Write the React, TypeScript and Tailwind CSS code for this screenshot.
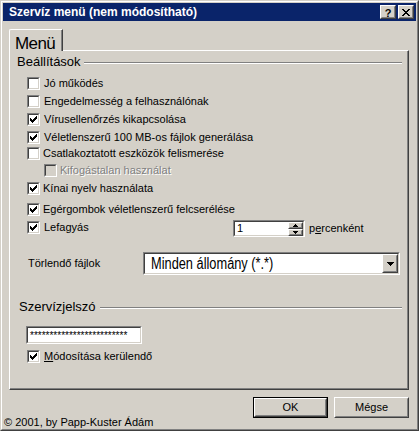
import React from "react";

const checkPath =
  "M6 0h1v1h-1z M5 1h2v1h-2z M0 2h1v1h-1z M4 2h3v1h-3z M0 3h2v1h-2z M3 3h3v1h-3z M0 4h5v1h-5z M1 5h3v1h-3z M2 6h1v1h-1z";

function Check({ checked, disabled }: { checked?: boolean; disabled?: boolean }) {
  return (
    <div className="w-[13px] h-[13px] shrink-0 border border-t-[#808080] border-l-[#808080] border-r-white border-b-white">
      <div
        className={`w-full h-full border border-t-[#404040] border-l-[#404040] border-r-[#d4d0c8] border-b-[#d4d0c8] flex items-center justify-center ${
          disabled ? "bg-[#d4d0c8]" : "bg-white"
        }`}
      >
        {checked && (
          <svg width="7" height="7" viewBox="0 0 7 7" shapeRendering="crispEdges">
            <path d={checkPath} fill={disabled ? "#808080" : "#000"} />
          </svg>
        )}
      </div>
    </div>
  );
}

function Row({
  label,
  checked,
  mt,
  gap,
}: {
  label: React.ReactNode;
  checked?: boolean;
  mt: string;
  gap: string;
}) {
  return (
    <div className={`flex items-center h-[13px] ml-[17px] ${mt} ${gap}`}>
      <Check checked={checked} />
      <span className="text-[11px] leading-[13px] whitespace-nowrap">{label}</span>
    </div>
  );
}

function Raised({ className, children }: { className?: string; children?: React.ReactNode }) {
  return (
    <div
      className={`border border-t-white border-l-white border-r-[#404040] border-b-[#404040] bg-[#d4d0c8] ${className ?? ""}`}
    >
      <div className="w-full h-full border border-t-[#d4d0c8] border-l-[#d4d0c8] border-r-[#808080] border-b-[#808080] flex items-center justify-center">
        {children}
      </div>
    </div>
  );
}

function Sunken({ className, children }: { className?: string; children?: React.ReactNode }) {
  return (
    <div
      className={`border border-t-[#808080] border-l-[#808080] border-r-white border-b-white ${className ?? ""}`}
    >
      <div className="w-full h-full border border-t-[#404040] border-l-[#404040] border-r-[#d4d0c8] border-b-[#d4d0c8] bg-white flex items-center">
        {children}
      </div>
    </div>
  );
}

function Etched({ className }: { className?: string }) {
  return <div className={`h-[2px] border-t border-t-[#808080] border-b border-b-white ${className ?? ""}`} />;
}

export default function App() {
  return (
    <div className="w-[419px] h-[431px] bg-[#d4d0c8] text-black font-['Liberation_Sans',Arial,sans-serif] border border-t-[#d4d0c8] border-l-[#d4d0c8] border-r-[#404040] border-b-[#404040]">
      <div className="h-full border border-t-white border-l-white border-r-[#808080] border-b-[#808080] p-px flex flex-col">
        {/* Title bar */}
        <div className="h-[18px] shrink-0 bg-[#0a246a] flex items-center pl-[6px] pr-[2px]">
          <span className="text-white font-bold text-[12px] leading-[14px] whitespace-nowrap flex-1">
            Szervíz menü (nem módosítható)
          </span>
          <Raised className="w-[16px] h-[14px]">
            <span className="font-bold text-[11px] leading-[10px] mt-[1px]">?</span>
          </Raised>
          <Raised className="w-[16px] h-[14px] ml-[2px]">
            <svg width="8" height="7" viewBox="0 0 8 7" shapeRendering="crispEdges">
              <path
                d="M0 0h2v1h-2z M6 0h2v1h-2z M1 1h2v1h-2z M5 1h2v1h-2z M2 2h4v1h-4z M3 3h2v1h-2z M2 4h4v1h-4z M1 5h2v1h-2z M5 5h2v1h-2z M0 6h2v1h-2z M6 6h2v1h-2z"
                fill="#000"
              />
            </svg>
          </Raised>
        </div>

        {/* Body */}
        <div className="flex-1 flex flex-col pl-[6px] pr-[7px] pt-[8px]">
          {/* Tab */}
          <div className="relative z-10 w-[54px] h-[22px] bg-[#d4d0c8] border-l border-t border-l-white border-t-white border-r border-r-[#404040] rounded-tl-[2px]">
            <div className="h-full border-r border-r-[#808080] pl-[5px] pt-[2px]">
              <span className="text-[17px] leading-[18px] tracking-[-0.6px] whitespace-nowrap">Menü</span>
            </div>
          </div>

          {/* Panel */}
          <div className="-mt-px h-[340px] border border-t-white border-l-white border-r-[#404040] border-b-[#404040]">
            <div className="h-full border-r border-b border-r-[#808080] border-b-[#808080] flex flex-col">
              {/* Beállítások header */}
              <div className="flex items-center h-[14px] mt-[4px] ml-[7px] mr-[5px] gap-[3px]">
                <span className="text-[13px] leading-[14px] whitespace-nowrap">Beállítások</span>
                <Etched className="flex-1 mt-[2px]" />
              </div>

              <Row label="Jó működés" mt="mt-[8px]" gap="gap-[4px]" />
              <Row label="Engedelmesség a felhasználónak" mt="mt-[5px]" gap="gap-[4px]" />
              <Row label="Vírusellenőrzés kikapcsolása" checked mt="mt-[5px]" gap="gap-[4px]" />
              <Row label="Véletlenszerű 100 MB-os fájlok generálása" checked mt="mt-[5px]" gap="gap-[4px]" />
              <Row label="Csatlakoztatott eszközök felismerése" mt="mt-[3px]" gap="gap-[3px]" />

              <div className="flex items-center h-[13px] ml-[34px] mt-[4px] gap-[3px]">
                <Check disabled />
                <span className="text-[11px] leading-[13px] whitespace-nowrap text-[#808080] [text-shadow:1px_1px_0_#fff]">
                  Kifogástalan használat
                </span>
              </div>

              <Row label="Kínai nyelv használata" checked mt="mt-[5px]" gap="gap-[3px]" />
              <Row label="Egérgombok véletlenszerű felcserélése" checked mt="mt-[8px]" gap="gap-[3px]" />

              {/* Lefagyás row */}
              <div className="flex items-start h-[17px] ml-[17px] mt-[4px]">
                <div className="w-[206px] flex items-center gap-[4px] mt-[1px] h-[13px]">
                  <Check checked />
                  <span className="text-[11px] leading-[13px] whitespace-nowrap">Lefagyás</span>
                </div>
                <Sunken className="w-[72px] h-[17px]">
                  <span className="text-[11px] leading-[13px] pl-[2px] flex-1">1</span>
                  <div className="w-[15px] h-full flex flex-col">
                    <Raised className="w-full flex-1">
                      <svg width="5" height="3" viewBox="0 0 5 3" shapeRendering="crispEdges">
                        <path d="M2 0h1v1h-1z M1 1h3v1h-3z M0 2h5v1h-5z" fill="#000" />
                      </svg>
                    </Raised>
                    <Raised className="w-full flex-1">
                      <svg width="5" height="3" viewBox="0 0 5 3" shapeRendering="crispEdges">
                        <path d="M0 0h5v1h-5z M1 1h3v1h-3z M2 2h1v1h-1z" fill="#000" />
                      </svg>
                    </Raised>
                  </div>
                </Sunken>
                <span className="text-[11px] leading-[13px] whitespace-nowrap ml-[4px] self-center">
                  p<span className="underline">e</span>rcenként
                </span>
              </div>

              {/* Törlendő fájlok */}
              <div className="flex items-center ml-[18px] mt-[15px] h-[23px]">
                <span className="w-[115px] text-[11px] leading-[13px] whitespace-nowrap">Törlendő fájlok</span>
                <Sunken className="w-[257px] h-[23px]">
                  <div className="flex-1 pl-[6px] overflow-hidden">
                    <span className="inline-block origin-left scale-x-[0.8] text-[16px] leading-[18px] whitespace-nowrap">
                      Minden állomány (*.*)
                    </span>
                  </div>
                  <Raised className="w-[16px] h-full">
                    <svg width="7" height="4" viewBox="0 0 7 4" shapeRendering="crispEdges">
                      <path d="M0 0h7v1h-7z M1 1h5v1h-5z M2 2h3v1h-3z M3 3h1v1h-1z" fill="#000" />
                    </svg>
                  </Raised>
                </Sunken>
              </div>

              {/* Szervízjelszó header */}
              <div className="flex items-center h-[14px] mt-[25px] ml-[9px] mr-[5px] gap-[4px]">
                <span className="text-[13px] leading-[14px] whitespace-nowrap">Szervízjelszó</span>
                <Etched className="flex-1 mt-[2px]" />
              </div>

              <Sunken className="w-[116px] h-[18px] ml-[16px] mt-[12px]">
                <span className="pl-[2px] text-[10px] leading-[13px] whitespace-nowrap">*************************</span>
              </Sunken>

              <Row
                label={
                  <>
                    <span className="underline">M</span>ódosítása kerülendő
                  </>
                }
                checked
                mt="mt-[6px]"
                gap="gap-[4px]"
              />
            </div>
          </div>

          {/* Footer */}
          <div className="flex-1 flex justify-between">
            <span className="self-end -ml-[5px] text-[11px] leading-[12px] whitespace-nowrap">
              © 2001, by Papp-Kuster Ádám
            </span>
            <div className="flex gap-[6px] mt-[7px] h-[21px]">
              <div className="w-[75px] h-[21px] border border-black">
                <Raised className="w-full h-full">
                  <span className="text-[11px] leading-[13px]">OK</span>
                </Raised>
              </div>
              <Raised className="w-[75px] h-[21px]">
                <span className="text-[11px] leading-[13px]">Mégse</span>
              </Raised>
            </div>
          </div>
        </div>
      </div>
    </div>
  );
}
